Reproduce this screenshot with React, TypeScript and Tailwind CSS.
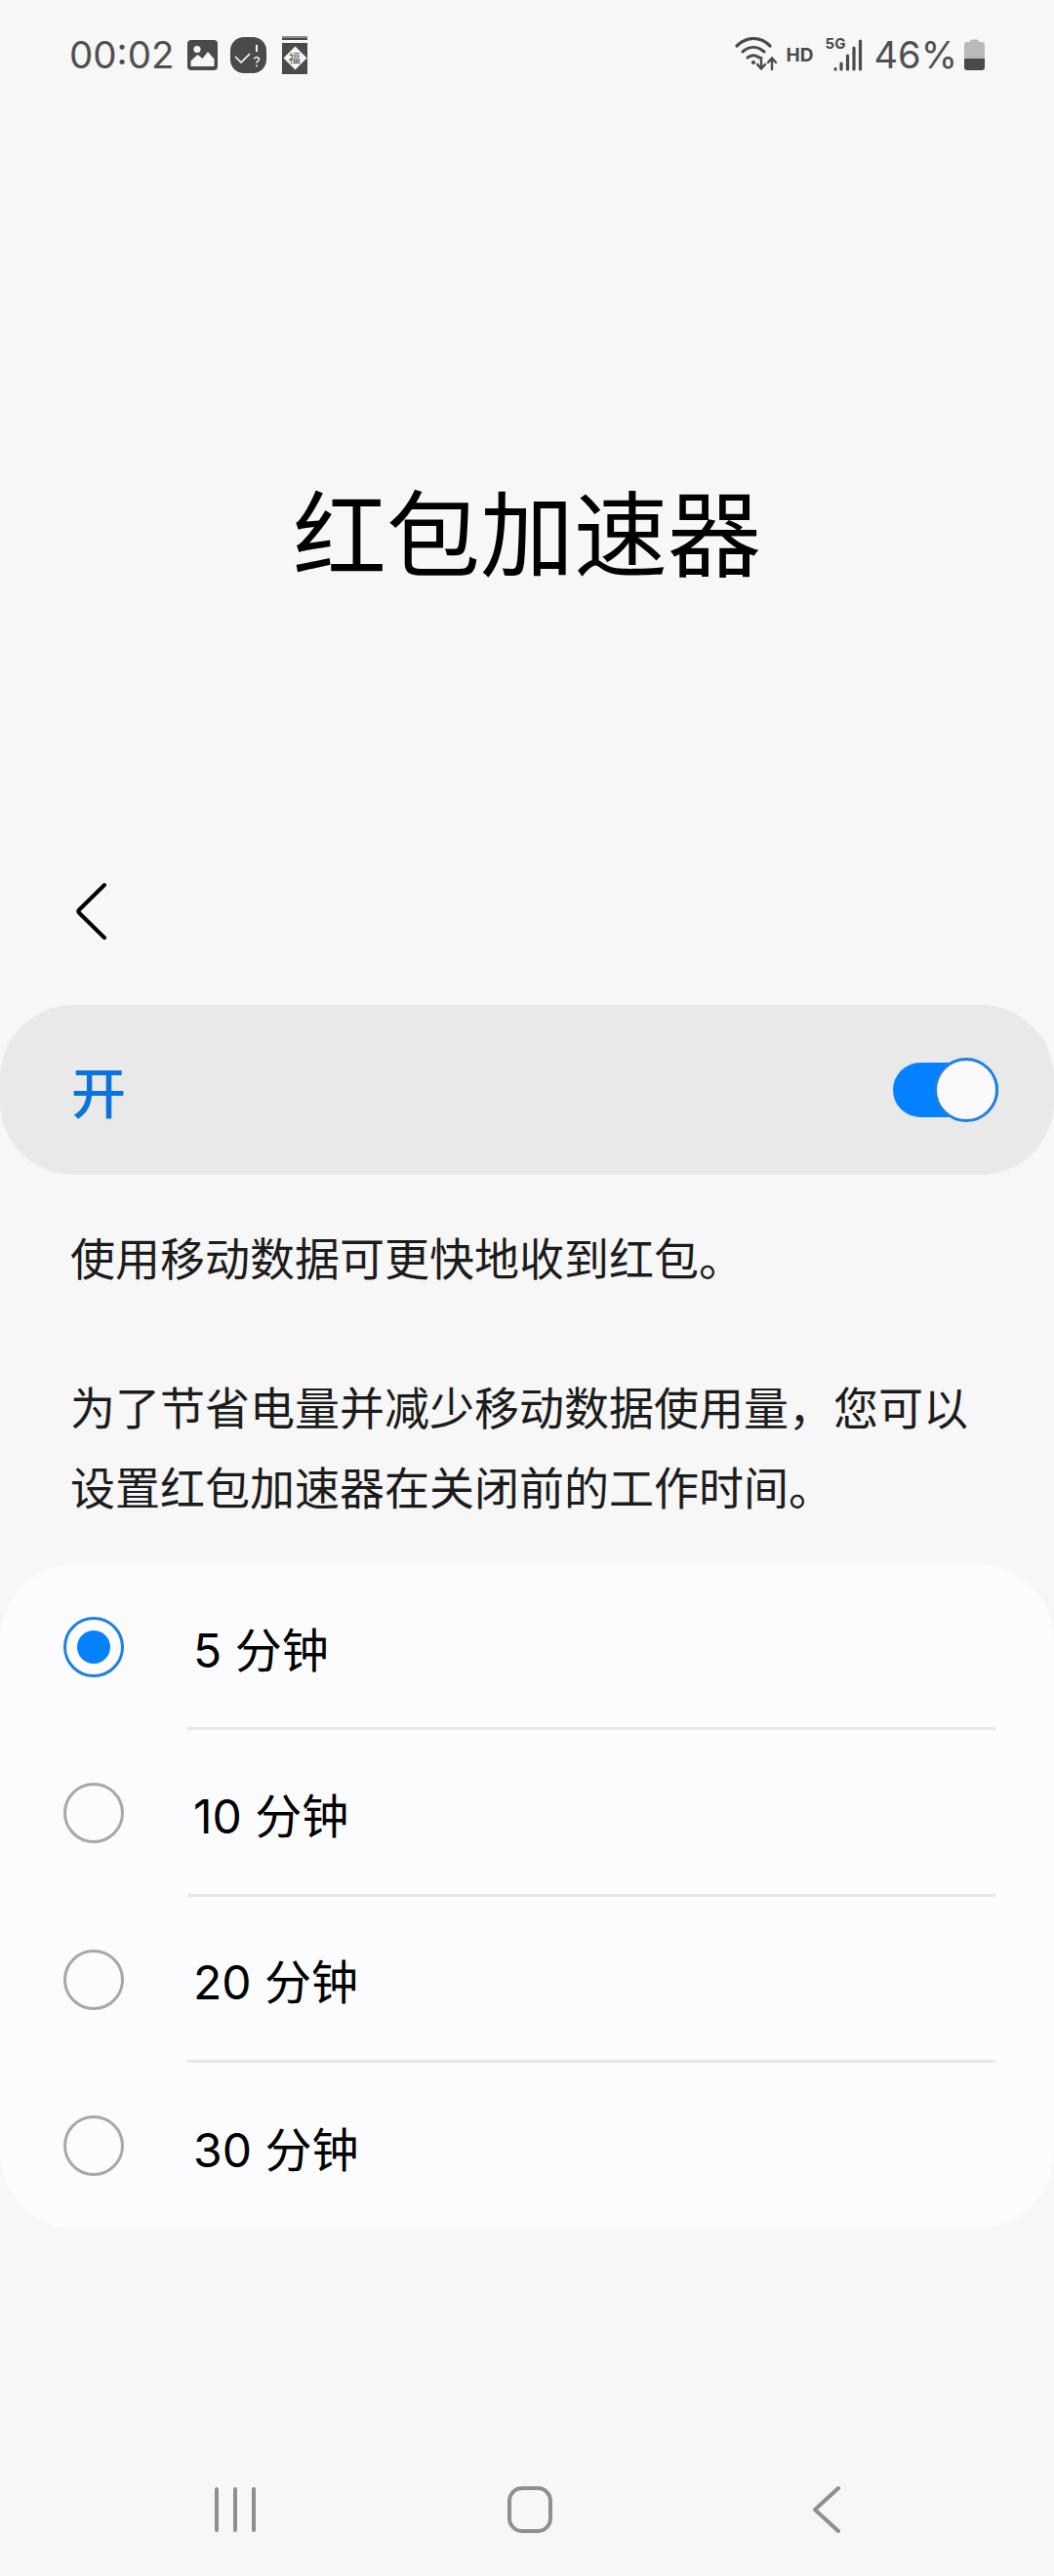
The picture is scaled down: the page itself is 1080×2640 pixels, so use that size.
import React from "react";

const font = 'Inter, "Noto Sans CJK SC", sans-serif';
const cjk = '"Noto Sans CJK SC", sans-serif';

function StatusLeftIcons() {
  return (
    <div className="flex items-center">
      <svg width="31" height="31" viewBox="0 0 31 31" className="ml-[14px]">
        <rect width="31" height="31" rx="4" fill="#4a4a4a" />
        <circle cx="10" cy="9.5" r="3.6" fill="#f7f7f7" />
        <path d="M3.5 27v-5.5l7-6.5 5 4 5.5-7 6.5 7.5V27z" fill="#f7f7f7" />
      </svg>
      <svg width="37" height="37" viewBox="0 0 37 37" className="ml-[13px]">
        <rect width="37" height="37" rx="14" fill="#4a4a4a" />
        <path d="M5 20l6 6 9-9" fill="none" stroke="#f7f7f7" strokeWidth="1.6" />
        <path d="M27 8v7" stroke="#f7f7f7" strokeWidth="2" />
        <path d="M24.500 22.500c.2-2.500 5-2.500 5 .2 0 2-2.500 2-2.500 4" fill="none" stroke="#f7f7f7" strokeWidth="1.500" />
        <circle cx="27" cy="29.500" r="1" fill="#f7f7f7" />
      </svg>
      <div className="relative ml-[16px] w-[26px] h-[39px] bg-[#4a4a4a] border-t-[2px] border-[#8a8a8a] flex items-center justify-center">
        <div className="absolute top-[2px] left-0 w-full h-[3px] bg-[#f7f7f7]" />
        <div className="w-[17px] h-[17px] bg-[#f7f7f7] rotate-45 flex items-center justify-center mt-[4px]">
          <span className="-rotate-45 text-[12px] leading-none text-[#4a4a4a]" style={{ fontFamily: cjk }}>福</span>
        </div>
      </div>
    </div>
  );
}

function StatusRightIcons() {
  return (
    <div className="flex items-center">
      <svg width="44" height="36" viewBox="0 0 44 36" fill="none" stroke="#4a4a4a" strokeLinecap="round">
        <path d="M2 9C12 -1 26 -1 36 9" strokeWidth="3.200" />
        <path d="M8 15c7-6 15-6 22 0" strokeWidth="3" />
        <path d="M13 21c4-3 8-3 12 0" strokeWidth="3" />
        <circle cx="19" cy="26" r="1.600" fill="#4a4a4a" strokeWidth="1" />
        <path d="M27 21v11M23 28l4 4.500 4-4.500M38 33V22M34 26l4-4.500 4 4.500" strokeWidth="2.400" />
      </svg>
      <span className="ml-[9px] w-[28px] text-[19px] leading-none font-bold text-[#4a4a4a]" style={{ fontFamily: font }}>HD</span>
      <div className="relative ml-[12px] w-[38px] h-[36px]">
        <span className="absolute left-0 top-[-1px] text-[15px] leading-none font-bold text-[#4a4a4a]" style={{ fontFamily: font }}>5G</span>
        <svg width="38" height="36" viewBox="0 0 38 36" className="absolute left-0 top-0" stroke="#4a4a4a" strokeWidth="3.200" strokeLinecap="round">
          <path d="M10 32.500v.6M16 27v6M22.500 19v14M29 11v22M35.500 4v29" />
        </svg>
      </div>
      <span className="ml-[12px] text-[38px] leading-none text-[#4f4f4f]" style={{ fontFamily: font }}>46%</span>
      <svg width="21" height="32" viewBox="0 0 21 32" className="ml-[7px]">
        <path d="M6 3V2a1.500 1.500 0 0 1 1.500-1.500h6A1.500 1.500 0 0 1 15 2v1h3a3 3 0 0 1 3 3v14H0V6a3 3 0 0 1 3-3z" fill="#b9b9b9" />
        <path d="M0 20h21v9a3 3 0 0 1-3 3H3a3 3 0 0 1-3-3z" fill="#4a4a4a" />
      </svg>
    </div>
  );
}

function OptionRow({ label, selected, last }: { label: string; selected?: boolean; last?: boolean }) {
  return (
    <div className="flex h-[171.500px]">
      <div className="w-[192px] flex items-center pl-[65px] shrink-0">
        {selected ? (
          <div className="w-[62px] h-[62px] rounded-full border-[3px] border-[#1f80e0] flex items-center justify-center">
            <div className="w-[34px] h-[34px] rounded-full bg-[#0381fe]" />
          </div>
        ) : (
          <div className="w-[62px] h-[62px] rounded-full border-[3px] border-[#a8a8a8]" />
        )}
      </div>
      <div className={`flex-1 mr-[60px] flex items-center pl-[6px] pt-[10px] ${last ? "" : "border-b-[3px] border-[#e7e7ea]"}`}>
        <span className="text-[48px] leading-none text-black" style={{ fontFamily: font }}>{label}</span>
      </div>
    </div>
  );
}

export default function App() {
  return (
    <div className="w-[1080px] h-[2640px] bg-[#f7f7f7] flex flex-col overflow-hidden" style={{ fontFamily: font }}>
      <div className="h-[112px] flex items-center justify-between pl-[71px] pr-[71px] shrink-0">
        <div className="flex items-center">
          <span className="text-[38.500px] leading-none text-[#4f4f4f]">00:02</span>
          <StatusLeftIcons />
        </div>
        <StatusRightIcons />
      </div>

      <div className="h-[768px] pt-[92px] flex items-center justify-center shrink-0">
        <h1 className="text-[96px] leading-none font-normal text-black" style={{ fontFamily: cjk }}>红包加速器</h1>
      </div>

      <div className="h-[150px] pl-[77px] pt-[25px] shrink-0">
        <svg width="32" height="58" viewBox="0 0 32 58" fill="none" stroke="#000" strokeWidth="4" strokeLinecap="round" strokeLinejoin="round">
          <path d="M30 2L4 27.500q-1.500 1.500 0 3L30 56" />
        </svg>
      </div>

      <div className="h-[174px] rounded-[75px] bg-[#e9e9e9] flex items-center justify-between pl-[73px] pr-[57px] shrink-0">
        <span className="text-[56px] leading-none font-medium text-[#0a74dc]" style={{ fontFamily: cjk }}>开</span>
        <div className="relative w-[108px] h-[56px] rounded-full bg-[#0381fe]">
          <div className="absolute right-0 top-[-5px] w-[66px] h-[66px] rounded-full bg-[#fafafa] border-[3px] border-[#1f80e0]" />
        </div>
      </div>

      <div className="px-[72px] pt-[42px] text-[46px] leading-[82px] text-[#1c1c1c] shrink-0" style={{ fontFamily: cjk }}>
        <p>使用移动数据可更快地收到红包。</p>
        <p className="mt-[71px]">为了节省电量并减少移动数据使用量，您可以</p>
        <p>设置红包加速器在关闭前的工作时间。</p>
      </div>

      <div className="mt-[40px] h-[681px] rounded-[78px] bg-[#fcfcff] flex flex-col shrink-0">
        <OptionRow label="5 分钟" selected />
        <OptionRow label="10 分钟" />
        <OptionRow label="20 分钟" />
        <OptionRow label="30 分钟" last />
      </div>

      <div className="mt-auto h-[120px] bg-[#f7f7f9] flex items-center pl-[220px] pb-[16px] shrink-0">
        <svg width="42" height="46" viewBox="0 0 42 46" stroke="#8f8f8f" strokeWidth="4" strokeLinecap="round">
          <path d="M2 2v42M21 2v42M40 2v42" />
        </svg>
        <svg width="46" height="48" viewBox="0 0 46 48" fill="none" stroke="#8f8f8f" strokeWidth="4" className="ml-[258px]">
          <rect x="2" y="2" width="42" height="44" rx="13" />
        </svg>
        <svg width="28" height="48" viewBox="0 0 28 48" fill="none" stroke="#8f8f8f" strokeWidth="4" strokeLinecap="round" strokeLinejoin="round" className="ml-[267px]">
          <path d="M26 2L2 24l24 22" />
        </svg>
      </div>
    </div>
  );
}
